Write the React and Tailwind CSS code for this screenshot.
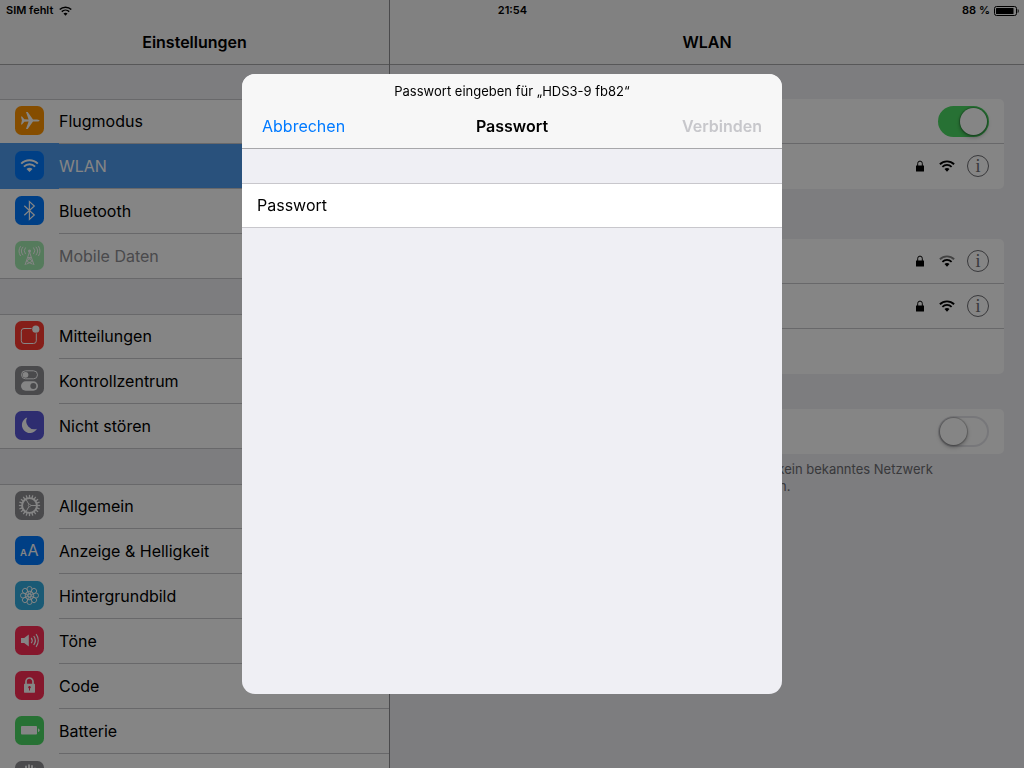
import React from "react";

function Tile({ color, dim, children }) {
  return (
    <svg viewBox="0 0 29 29" className={`h-[29px] w-[29px] shrink-0 ${dim ? "opacity-50" : ""}`} aria-hidden="true">
      <rect width="29" height="29" rx="6.5" fill={color} />
      {children}
    </svg>
  );
}

function WifiGlyph({ className, weak }) {
  return (
    <svg viewBox="0 0 16 12" className={className} fill="none" stroke="currentColor" aria-hidden="true">
      <path d="M0.9 4.2C4.8 0.4 11.2 0.4 15.1 4.2" strokeWidth="1.9" opacity={weak ? 0.5 : 1} />
      <path d="M3.4 6.8C6 4.3 10 4.3 12.6 6.8" strokeWidth="1.8" />
      <path d="M5.5 9.1C7 7.7 9 7.7 10.5 9.1L8 11.7Z" fill="currentColor" stroke="none" />
    </svg>
  );
}

function LockGlyph() {
  return (
    <svg viewBox="0 0 8 12" className="h-3 w-2" aria-hidden="true">
      <path d="M1.7 6V3.4a2.3 2.3 0 0 1 4.6 0V6" fill="none" stroke="currentColor" strokeWidth="1" />
      <rect y="5.4" width="8" height="6.2" rx="0.4" fill="currentColor" />
    </svg>
  );
}

const petals = [0, 45, 90, 135, 180, 225, 270, 315];
const teeth = Array.from({ length: 20 }, (_, i) => i * 18);

const icons = {
  plane: (
    <Tile color="#ff9500">
      <path
        fill="#fff"
        d="M6 10.5H7L9.3 13.3L13.6 13.4L11 6H12.7L18 13.4H22C23.6 13.5 24.6 14 24.6 14.5C24.6 15 23.6 15.5 22 15.6H18L12.7 23H11L13.6 15.6L9.3 15.7L7 18.5H6L6.9 14.5Z"
      />
    </Tile>
  ),
  wifi: (
    <Tile color="#007aff">
      <g fill="none" stroke="#fff">
        <path d="M6.2 12.7C10.8 8.1 18.2 8.1 22.8 12.7" strokeWidth="1.9" />
        <path d="M8.9 15.6C12 12.5 17 12.5 20.1 15.6" strokeWidth="1.9" />
      </g>
      <path fill="#fff" d="M11.5 17.9c1.7-1.7 4.3-1.7 6 0l-3 3z" />
    </Tile>
  ),
  bluetooth: (
    <Tile color="#007aff">
      <path d="M9.3 9.8l10 9.2-4.9 4.4V5.6l4.9 4.4-10 9.2" fill="none" stroke="#fff" strokeWidth="1.2" />
    </Tile>
  ),
  antenna: (
    <Tile color="#4cd964" dim>
      <g fill="none" stroke="#fff" strokeWidth="1">
        <path d="M14.5 11L10 24M14.5 11L19 24M12.7 16.5h3.6M11.4 20.2l6.2 3M17.6 20.2l-6.2 3M12.7 16.5l4.9 3.7M16.3 16.5l-4.9 3.7" />
        <path d="M10.6 6.5a5 5 0 0 0 0 6.6M18.4 6.5a5 5 0 0 1 0 6.6M8.1 5.8a6.6 6.6 0 0 0 0 8.4M20.9 5.8a6.6 6.6 0 0 1 0 8.4M5.6 5.2a9 9 0 0 0 0 9.8M23.4 5.2a9 9 0 0 1 0 9.8" />
      </g>
      <circle cx="14.5" cy="10" r="1.5" fill="#fff" />
    </Tile>
  ),
  notifications: (
    <Tile color="#ff3b30">
      <path d="M16.6 7.5H9a2.7 2.7 0 0 0-2.7 2.7v9.6A2.7 2.7 0 0 0 9 22.5h9.6a2.7 2.7 0 0 0 2.7-2.7v-7.5" fill="none" stroke="#fff" strokeWidth="1" />
      <circle cx="20.8" cy="8.2" r="3.6" fill="#fff" />
    </Tile>
  ),
  control: (
    <Tile color="#8e8e93">
      <rect x="6.5" y="4.8" width="16" height="8" rx="4" fill="none" stroke="#fff" strokeWidth="1" />
      <circle cx="10.5" cy="8.8" r="2.9" fill="#fff" />
      <rect x="6" y="15.3" width="17" height="9.4" rx="4.7" fill="#fff" />
      <circle cx="18.3" cy="20" r="3" fill="#8e8e93" />
    </Tile>
  ),
  moon: (
    <Tile color="#5856d6">
      <path d="M12.2 6.5a8 8 0 1 0 9.8 11.2A8 8 0 0 1 12.2 6.5z" fill="#fff" />
    </Tile>
  ),
  gear: (
    <Tile color="#8e8e93">
      <g stroke="#fff" fill="none">
        {teeth.map((a) => (
          <path key={a} d="M14.5 3.9v3" strokeWidth="1.3" transform={`rotate(${a} 14.5 14.5)`} />
        ))}
        <circle cx="14.5" cy="14.5" r="7.4" strokeWidth="1.9" />
        <circle cx="14.5" cy="14.5" r="1.2" strokeWidth="0.8" />
        <path d="M15.7 14.5h6M13.9 13.4l-3-5.2M13.9 15.6l-3 5.2" strokeWidth="1" />
      </g>
    </Tile>
  ),
  display: (
    <Tile color="#007aff">
      <text x="5" y="19.5" fontSize="9.5" fontWeight="600" fill="#fff" fontFamily="Inter, sans-serif">A</text>
      <text x="12.4" y="19.5" fontSize="16" fill="#fff" fontFamily="Inter, sans-serif">A</text>
    </Tile>
  ),
  wallpaper: (
    <Tile color="#32ade0">
      <g fill="none" stroke="#fff" strokeWidth="0.9">
        {petals.map((a) => (
          <g key={a} transform={`rotate(${a} 14.5 14.5)`}>
            <circle cx="14.5" cy="8.1" r="2.6" />
            <circle cx="14.5" cy="11.6" r="1.5" strokeWidth="0.7" />
          </g>
        ))}
        <circle cx="14.5" cy="14.5" r="1.7" />
      </g>
    </Tile>
  ),
  sound: (
    <Tile color="#ff2d55">
      <path d="M6 12h3.2l4.6-3.6v12.2L9.2 17H6z" fill="#fff" />
      <g fill="none" stroke="#fff" strokeWidth="1.2">
        <path d="M16.2 11.8a4.5 4.5 0 0 1 0 5.4M18.7 10a7.5 7.5 0 0 1 0 9M21.1 8.2a10.5 10.5 0 0 1 0 12.6" />
      </g>
    </Tile>
  ),
  code: (
    <Tile color="#ff2d55">
      <path d="M11 13.5v-3a3.5 3.5 0 0 1 7 0v3" fill="none" stroke="#fff" strokeWidth="1.7" />
      <rect x="9" y="12.7" width="11" height="9" rx="0.6" fill="#fff" />
      <circle cx="14.5" cy="16.3" r="1.2" fill="#ff2d55" />
      <path d="M14.5 16.5v3" stroke="#ff2d55" strokeWidth="1" />
    </Tile>
  ),
  battery: (
    <Tile color="#4cd964">
      <rect x="6" y="10" width="16" height="8.5" rx="0.9" fill="#fff" />
      <path d="M23 12.5c1.2.3 1.6 1 1.6 1.8s-.4 1.5-1.6 1.8z" fill="#fff" />
    </Tile>
  ),
  hand: (
    <Tile color="#8e8e93">
      <path d="M11 16V5.5M14 14V4.2M17 14V5M20 16V7.5" fill="none" stroke="#fff" strokeWidth="1.9" strokeLinecap="round" />
      <path d="M10 14h11v5c0 4-2 6-5 6-4 0-6-4-8-8z" fill="#fff" />
    </Tile>
  ),
};

const groups = [
  [
    { label: "Flugmodus", icon: "plane" },
    { label: "WLAN", icon: "wifi", selected: true },
    { label: "Bluetooth", icon: "bluetooth" },
    { label: "Mobile Daten", icon: "antenna", disabled: true },
  ],
  [
    { label: "Mitteilungen", icon: "notifications" },
    { label: "Kontrollzentrum", icon: "control" },
    { label: "Nicht stören", icon: "moon" },
  ],
  [
    { label: "Allgemein", icon: "gear" },
    { label: "Anzeige & Helligkeit", icon: "display" },
    { label: "Hintergrundbild", icon: "wallpaper" },
    { label: "Töne", icon: "sound" },
    { label: "Code", icon: "code" },
    { label: "Batterie", icon: "battery" },
    { label: "Datenschutz", icon: "hand" },
  ],
];

function MenuRow({ item, last }) {
  const tone = item.selected ? "-mt-px bg-[#4f9bee] pt-px text-white" : item.disabled ? "text-[#8e8e93]" : "text-black";
  return (
    <li className={tone}>
      <button type="button" disabled={item.disabled} className="flex h-[45px] w-full items-stretch pl-[15px] text-left">
        <span className="flex w-11 items-center pb-0.5">{icons[item.icon]}</span>
        <span className={`flex flex-1 items-center border-b leading-4 ${last ? "border-transparent" : "border-[#c8c7cc]"}`}>
          {item.label}
        </span>
      </button>
    </li>
  );
}

function Toggle({ label, on }) {
  return (
    <label className="flex h-[45px] items-center justify-between px-[15px]">
      <span>{label}</span>
      <input type="checkbox" role="switch" defaultChecked={on} className="peer sr-only" />
      <span className="flex h-[31px] w-[51px] rounded-full border-2 border-[#e5e5ea] bg-white peer-checked:justify-end peer-checked:border-[#4cd964] peer-checked:bg-[#4cd964]">
        <span className="h-[27px] w-[27px] rounded-full bg-white shadow-[0_2px_4px_rgba(0,0,0,0.35),0_0_1px_1px_rgba(0,0,0,0.2)]" />
      </span>
    </label>
  );
}

function NetworkRow({ name, weak, bordered }) {
  return (
    <li className="pl-[15px]">
      <div className={`flex h-[45px] items-center pr-[15px] ${bordered ? "border-b border-[#c8c7cc]" : "pb-px"}`}>
        <span className="flex-1">{name}</span>
        <LockGlyph />
        <WifiGlyph className="ml-[15px] h-3 w-4" weak={weak} />
        <button
          type="button"
          aria-label={`Details zu ${name}`}
          className="ml-3 flex h-[22px] w-[22px] items-center justify-center rounded-full border border-[#6d6d72] font-['Liberation_Serif',serif] text-lg leading-none text-[#6d6d72]"
        >
          i
        </button>
      </div>
    </li>
  );
}

function Sidebar() {
  return (
    <aside className="flex w-2/5 max-w-[390px] shrink-0 flex-col border-r border-[#8e8e93] bg-[#efeff4]">
      <header className="flex h-[65px] shrink-0 items-end justify-center border-b border-[#a7a7aa] bg-[#f7f7f7] pb-2.5">
        <h1 className="leading-6 font-semibold">Einstellungen</h1>
      </header>
      <nav className="flex min-h-0 flex-1 flex-col gap-[35px] overflow-y-auto pt-[34px] [scrollbar-width:none]">
        {groups.map((group, g) => (
          <ul key={g} className="shrink-0 bg-white shadow-[inset_0_1px_0_#c8c7cc,inset_0_-1px_0_#c8c7cc]">
            {group.map((item, i) => (
              <MenuRow key={item.label} item={item} last={i === group.length - 1} />
            ))}
          </ul>
        ))}
      </nav>
    </aside>
  );
}

function WlanPanel() {
  return (
    <main className="flex min-w-0 flex-1 flex-col bg-[#efeff4]">
      <header className="flex h-[65px] shrink-0 items-end justify-center border-b border-[#a7a7aa] bg-[#f7f7f7] pb-2.5">
        <h2 className="leading-6 font-semibold">WLAN</h2>
      </header>
      <div className="px-5 pt-[34px]">
        <section className="rounded-[5px] bg-white">
          <div className="shadow-[inset_0_-1px_0_#c8c7cc]">
            <Toggle label="WLAN" on />
          </div>
          <ul>
            <NetworkRow name="Heimnetz" />
          </ul>
        </section>
        <section className="mt-[50px] rounded-[5px] bg-white">
          <ul>
            <NetworkRow name="HDS3-9 fb82" weak bordered />
            <NetworkRow name="Gastnetz" bordered />
          </ul>
          <button type="button" className="flex h-[45px] w-full items-center px-[15px]">Anderes …</button>
        </section>
        <section className="mt-[35px] rounded-[5px] bg-white">
          <Toggle label="Auf Netze hinweisen" />
        </section>
        <p className="px-4 pt-[7px] text-[13px] leading-[17px] text-[#6d6d72]">
          Bekannte Netzwerke werden automatisch verbunden. Ist kein bekanntes Netzwerk
          <br />
          verfügbar, musst du manuell ein anderes Netzwerk wählen.
        </p>
      </div>
    </main>
  );
}

function StatusBar() {
  return (
    <div className="absolute inset-x-0 top-0 grid h-[21px] grid-cols-3 items-center pr-[5px] pl-1.5 text-[11px] font-semibold">
      <span className="flex items-center gap-1.5">
        SIM fehlt
        <WifiGlyph className="h-2.5 w-[13px]" />
      </span>
      <time className="text-center">21:54</time>
      <span className="flex items-center justify-end gap-1">
        88 %
        <svg viewBox="0 0 25 10" className="h-2.5 w-[25px]" aria-hidden="true">
          <rect x="0.5" y="0.5" width="22" height="9" rx="2" fill="none" stroke="currentColor" />
          <rect x="2" y="2" width="17.5" height="6" rx="0.6" fill="currentColor" />
          <path d="M23.7 3c1.3.4 1.3 3.6 0 4z" fill="currentColor" />
        </svg>
      </span>
    </div>
  );
}

function PasswordSheet() {
  return (
    <div className="fixed inset-0 flex items-center justify-center bg-black/48">
      <form
        role="dialog"
        aria-modal="true"
        aria-labelledby="sheet-title"
        onSubmit={(e) => e.preventDefault()}
        className="flex h-[620px] max-h-full w-full max-w-[540px] flex-col overflow-hidden rounded-[13px] bg-[#efeff4]"
      >
        <header className="border-b border-[#a7a7aa] bg-[#f7f7f7] px-5 pt-2 pb-2.5">
          <p className="text-center text-[13px] leading-[18px]">Passwort eingeben für „HDS3-9 fb82“</p>
          <div className="mt-3.5 grid grid-cols-3 items-center leading-6">
            <button type="button" className="justify-self-start text-[#007aff]">Abbrechen</button>
            <h2 id="sheet-title" className="text-center font-semibold">Passwort</h2>
            <button type="submit" disabled className="justify-self-end font-semibold text-[#c7c7cb]">Verbinden</button>
          </div>
        </header>
        <div className="mt-[34px] flex h-[45px] items-center gap-4 border-y border-[#c8c7cc] bg-white px-[15px] pb-0.5">
          <label htmlFor="password">Passwort</label>
          <input id="password" type="password" className="h-full min-w-0 flex-1 outline-none" />
        </div>
      </form>
    </div>
  );
}

export default function App() {
  return (
    <div className="relative flex h-screen overflow-hidden font-['Inter',sans-serif] text-base text-black">
      <Sidebar />
      <WlanPanel />
      <StatusBar />
      <PasswordSheet />
    </div>
  );
}
